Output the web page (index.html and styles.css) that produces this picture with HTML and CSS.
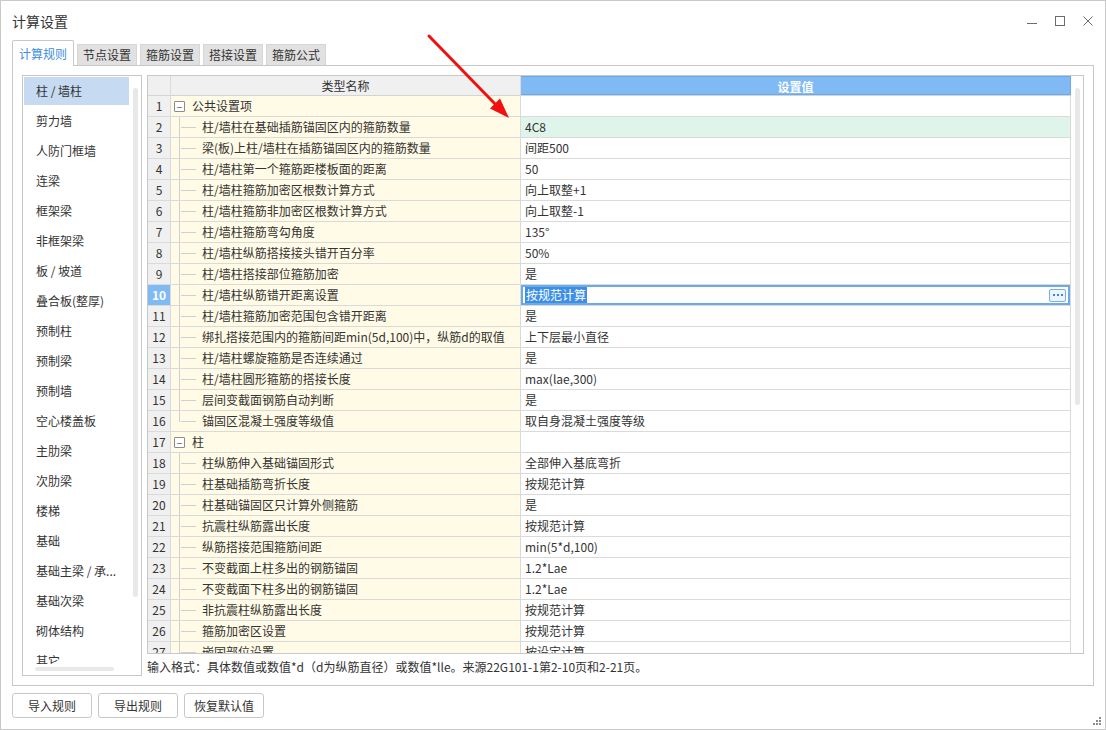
FILE: index.html
```html
<!DOCTYPE html>
<html lang="zh-CN">
<head>
<meta charset="utf-8">
<title>计算设置</title>
<link rel="stylesheet" href="styles.css">
</head>
<body>
<div class="window">
  <div class="titlebar">
    <span class="title">计算设置</span>
    <div class="controls">
      <svg class="ctl" width="10" height="10" viewBox="0 0 10 10"><line x1="0" y1="7.5" x2="10" y2="7.5" stroke="#6b6b6b" stroke-width="1"/></svg>
      <svg class="ctl" width="10" height="10" viewBox="0 0 10 10"><rect x="0.5" y="0.5" width="9" height="9" fill="none" stroke="#6b6b6b" stroke-width="1"/></svg>
      <svg class="ctl" width="10" height="10" viewBox="0 0 10 10"><path d="M0.5 0.5 L9.5 9.5 M9.5 0.5 L0.5 9.5" stroke="#6b6b6b" stroke-width="1"/></svg>
    </div>
  </div>

  <div class="tabs">
    <div class="tab active">计算规则</div>
    <div class="tab">节点设置</div>
    <div class="tab">箍筋设置</div>
    <div class="tab">搭接设置</div>
    <div class="tab">箍筋公式</div>
  </div>

  <div class="panel">
    <div class="list">
      <div class="list-main">
        <div class="list-items">
          <div class="item sel">柱 / 墙柱</div>
          <div class="item">剪力墙</div>
          <div class="item">人防门框墙</div>
          <div class="item">连梁</div>
          <div class="item">框架梁</div>
          <div class="item">非框架梁</div>
          <div class="item">板 / 坡道</div>
          <div class="item">叠合板(整厚)</div>
          <div class="item">预制柱</div>
          <div class="item">预制梁</div>
          <div class="item">预制墙</div>
          <div class="item">空心楼盖板</div>
          <div class="item">主肋梁</div>
          <div class="item">次肋梁</div>
          <div class="item">楼梯</div>
          <div class="item">基础</div>
          <div class="item">基础主梁 / 承...</div>
          <div class="item">基础次梁</div>
          <div class="item">砌体结构</div>
          <div class="item">其它</div>
        </div>
        <div class="list-vscroll"><div class="vthumb-list"></div></div>
      </div>
      <div class="list-hscroll"><div class="hthumb"></div></div>
    </div>

    <div class="right">
      <div class="table">
        <div class="grid">
          <div class="row head">
            <div class="c num"></div>
            <div class="c name-h">类型名称</div>
            <div class="c val-h">设置值</div>
          </div>
          <div class="row"><div class="c num">1</div><div class="c name group"><span class="box">−</span>公共设置项</div><div class="c val"></div></div>
          <div class="row"><div class="c num">2</div><div class="c name child">柱/墙柱在基础插筋锚固区内的箍筋数量</div><div class="c val green">4C8</div></div>
          <div class="row"><div class="c num">3</div><div class="c name child">梁(板)上柱/墙柱在插筋锚固区内的箍筋数量</div><div class="c val">间距500</div></div>
          <div class="row"><div class="c num">4</div><div class="c name child">柱/墙柱第一个箍筋距楼板面的距离</div><div class="c val">50</div></div>
          <div class="row"><div class="c num">5</div><div class="c name child">柱/墙柱箍筋加密区根数计算方式</div><div class="c val">向上取整+1</div></div>
          <div class="row"><div class="c num">6</div><div class="c name child">柱/墙柱箍筋非加密区根数计算方式</div><div class="c val">向上取整-1</div></div>
          <div class="row"><div class="c num">7</div><div class="c name child">柱/墙柱箍筋弯勾角度</div><div class="c val">135°</div></div>
          <div class="row"><div class="c num">8</div><div class="c name child">柱/墙柱纵筋搭接接头错开百分率</div><div class="c val">50%</div></div>
          <div class="row"><div class="c num">9</div><div class="c name child">柱/墙柱搭接部位箍筋加密</div><div class="c val">是</div></div>
          <div class="row"><div class="c num cur">10</div><div class="c name child">柱/墙柱纵筋错开距离设置</div><div class="c val edit"><span class="seltext">按规范计算</span><span class="more"><i></i><i></i><i></i></span></div></div>
          <div class="row"><div class="c num">11</div><div class="c name child">柱/墙柱箍筋加密范围包含错开距离</div><div class="c val">是</div></div>
          <div class="row"><div class="c num">12</div><div class="c name child">绑扎搭接范围内的箍筋间距min(5d,100)中，纵筋d的取值</div><div class="c val">上下层最小直径</div></div>
          <div class="row"><div class="c num">13</div><div class="c name child">柱/墙柱螺旋箍筋是否连续通过</div><div class="c val">是</div></div>
          <div class="row"><div class="c num">14</div><div class="c name child">柱/墙柱圆形箍筋的搭接长度</div><div class="c val">max(lae,300)</div></div>
          <div class="row"><div class="c num">15</div><div class="c name child">层间变截面钢筋自动判断</div><div class="c val">是</div></div>
          <div class="row"><div class="c num">16</div><div class="c name child last">锚固区混凝土强度等级值</div><div class="c val">取自身混凝土强度等级</div></div>
          <div class="row"><div class="c num">17</div><div class="c name group"><span class="box">−</span>柱</div><div class="c val"></div></div>
          <div class="row"><div class="c num">18</div><div class="c name child">柱纵筋伸入基础锚固形式</div><div class="c val">全部伸入基底弯折</div></div>
          <div class="row"><div class="c num">19</div><div class="c name child">柱基础插筋弯折长度</div><div class="c val">按规范计算</div></div>
          <div class="row"><div class="c num">20</div><div class="c name child">柱基础锚固区只计算外侧箍筋</div><div class="c val">是</div></div>
          <div class="row"><div class="c num">21</div><div class="c name child">抗震柱纵筋露出长度</div><div class="c val">按规范计算</div></div>
          <div class="row"><div class="c num">22</div><div class="c name child">纵筋搭接范围箍筋间距</div><div class="c val">min(5*d,100)</div></div>
          <div class="row"><div class="c num">23</div><div class="c name child">不变截面上柱多出的钢筋锚固</div><div class="c val">1.2*Lae</div></div>
          <div class="row"><div class="c num">24</div><div class="c name child">不变截面下柱多出的钢筋锚固</div><div class="c val">1.2*Lae</div></div>
          <div class="row"><div class="c num">25</div><div class="c name child">非抗震柱纵筋露出长度</div><div class="c val">按规范计算</div></div>
          <div class="row"><div class="c num">26</div><div class="c name child">箍筋加密区设置</div><div class="c val">按规范计算</div></div>
          <div class="row"><div class="c num">27</div><div class="c name child">嵌固部位设置</div><div class="c val">按设定计算</div></div>
        </div>
        <div class="vscroll"><div class="vthumb"></div></div>
      </div>
      <div class="hint">输入格式：具体数值或数值*d（d为纵筋直径）或数值*lle。来源22G101-1第2-10页和2-21页。</div>
    </div>
  </div>

  <div class="buttons">
    <button class="btn">导入规则</button>
    <button class="btn">导出规则</button>
    <button class="btn">恢复默认值</button>
  </div>

  <svg class="arrow" width="1106" height="730" viewBox="0 0 1106 730">
    <line x1="429" y1="36" x2="498" y2="107" stroke="#f01010" stroke-width="3" stroke-linecap="round"/>
    <polygon points="509,118 490,108.5 500,98.5" fill="#f01010"/>
  </svg>

  <svg class="grip" width="10" height="10" viewBox="0 0 10 10">
    <rect x="6" y="0" width="2" height="2" fill="#8a8a8a"/>
    <rect x="3" y="3" width="2" height="2" fill="#8a8a8a"/>
    <rect x="6" y="3" width="2" height="2" fill="#8a8a8a"/>
    <rect x="0" y="6" width="2" height="2" fill="#8a8a8a"/>
    <rect x="3" y="6" width="2" height="2" fill="#8a8a8a"/>
    <rect x="6" y="6" width="2" height="2" fill="#8a8a8a"/>
  </svg>
</div>
</body>
</html>
```

FILE: styles.css
```css
* { box-sizing: border-box; }

html, body {
  margin: 0;
  padding: 0;
  background: #ffffff;
}

body {
  font-family: "Noto Sans CJK SC", "Microsoft YaHei", sans-serif;
  font-size: 12px;
  color: #333333;
}

.window {
  position: relative;
  width: 1106px;
  height: 730px;
  border: 1px solid #c9c9c9;
  background: #ffffff;
  overflow: hidden;
}

/* title bar */
.titlebar {
  height: 39px;
  display: flex;
  align-items: center;
  justify-content: space-between;
  padding: 0 12px 0 11px;
}
.title {
  font-size: 14px;
  line-height: 20px;
  color: #333333;
}
.controls {
  display: flex;
  gap: 18px;
  align-items: center;
  padding-top: 1px;
}
.ctl { display: block; }

/* tabs */
.tabs {
  display: flex;
  align-items: flex-end;
  gap: 3px;
  height: 25px;
  margin-left: 11px;
}
.tab {
  width: 60px;
  height: 21px;
  background: #e1e1e1;
  border: 1px solid #d6d6d6;
  border-bottom: none;
  text-align: center;
  line-height: 20px;
  color: #333333;
}
.tab.active {
  width: 62px;
  height: 26px;
  background: #ffffff;
  border: 1px solid #c8c8c8;
  border-bottom: none;
  border-radius: 2px 2px 0 0;
  color: #3b8de0;
  line-height: 25px;
  margin-bottom: -1px;
  position: relative;
  z-index: 2;
}

/* panel */
.panel {
  position: relative;
  margin: 0 11px;
  height: 621px;
  border: 1px solid #c8c8c8;
  padding: 9px 9px 9px 9px;
  display: flex;
  gap: 5px;
}

/* left list */
.list {
  width: 120px;
  height: 601px;
  border: 1px solid #c8c8c8;
  display: flex;
  flex-direction: column;
}
.list-main {
  flex: 1;
  display: flex;
  overflow: hidden;
}
.list-items {
  width: 108px;
  padding-top: 1px;
  overflow: hidden;
}
.item {
  margin-left: 1px;
  width: 105px;
  height: 28px;
  margin-bottom: 2px;
  padding-left: 12px;
  line-height: 28px;
  white-space: nowrap;
  color: #333333;
}
.item.sel { background: #c6dbf1; }
.list-vscroll {
  width: 10px;
  padding-left: 2px;
  padding-top: 12px;
}
.vthumb-list {
  width: 5px;
  height: 509px;
  border-radius: 3px;
  background: #e8e8e8;
}
.list-hscroll {
  height: 11px;
  padding: 3px 0 0 12px;
}
.hthumb {
  width: 79px;
  height: 4px;
  border-radius: 2px;
  background: #e8e8e8;
}

/* right side */
.right {
  width: 937px;
  display: flex;
  flex-direction: column;
}
.table {
  height: 579px;
  border: 1px solid #c8c8c8;
  display: flex;
}
.grid {
  width: 923px;
  overflow: hidden;
}
.vscroll {
  width: 12px;
  padding: 12px 0 0 4px;
}
.vthumb {
  width: 5px;
  height: 317px;
  border-radius: 3px;
  background: #e8e8e8;
}

.row {
  display: grid;
  grid-template-columns: 23px 350px 550px;
  height: 21px;
  border-bottom: 1px solid #dadada;
}
.c {
  border-right: 1px solid #dadada;
  line-height: 20px;
  white-space: nowrap;
  overflow: hidden;
}
.num {
  background: #f0f0f0;
  text-align: center;
  color: #333333;
  font-size: 12px;
}
.num.cur {
  background: #7fbaf5;
  color: #ffffff;
  font-weight: bold;
}
.row.head {
  height: 20px;
  border-bottom: 1px solid #d4d4d4;
}
.row.head .c { line-height: 19px; }
.name-h {
  background: #f0f0f0;
  text-align: center;
  color: #333333;
}
.val-h {
  background: #7fbaf5;
  border: 1px solid #6aaae6;
  border-left: none;
  text-align: center;
  color: #ffffff;
  font-weight: bold;
}

.name {
  background-color: #fffbe6;
}
.name.group {
  padding-left: 3px;
  display: flex;
  align-items: center;
}
.box {
  display: inline-block;
  width: 11px;
  height: 11px;
  border: 1px solid #8c8c8c;
  border-radius: 1px;
  font-size: 10px;
  line-height: 9px;
  text-align: center;
  color: #555555;
  margin-right: 7px;
  background: #ffffff;
}
.name.child {
  padding-left: 31px;
  background-image:
    linear-gradient(#cfcfcf, #cfcfcf),
    linear-gradient(#cfcfcf, #cfcfcf);
  background-size: 1px 100%, 15px 1px;
  background-position: 8px 0, 10px 10px;
  background-repeat: no-repeat;
}
.name.child.last {
  background-size: 1px 11px, 15px 1px;
}

.val {
  padding-left: 4px;
  background: #ffffff;
}
.val.green { background: #dff5ec; }
.val.edit {
  box-shadow: inset 0 0 0 2px #6aaae6;
  display: flex;
  align-items: center;
  justify-content: space-between;
  padding-right: 4px;
}
.seltext {
  background: #3d8ee6;
  color: #ffffff;
  line-height: 16px;
  padding: 0 1px;
}
.more {
  width: 17px;
  height: 13px;
  border: 1px solid #7aaee6;
  border-radius: 2px;
  background: #eef4fb;
  display: flex;
  align-items: center;
  justify-content: center;
  gap: 2px;
}
.more i {
  display: block;
  width: 2px;
  height: 2px;
  background: #3b87e0;
}

.hint {
  padding-top: 2px;
  line-height: 22px;
  color: #333333;
  white-space: nowrap;
}

/* buttons */
.buttons {
  display: flex;
  gap: 6px;
  margin: 7px 0 0 11px;
}
.btn {
  width: 80px;
  height: 25px;
  border: 1px solid #c8c8c8;
  border-radius: 3px;
  background: #ffffff;
  font-family: "Noto Sans CJK SC", "Microsoft YaHei", sans-serif;
  font-size: 12px;
  color: #333333;
  padding: 0;
  line-height: 23px;
}

/* overlays */
.arrow {
  position: absolute;
  left: -1px;
  top: -1px;
  pointer-events: none;
  z-index: 10;
}
.grip {
  position: absolute;
  right: 2px;
  bottom: 2px;
}
```
